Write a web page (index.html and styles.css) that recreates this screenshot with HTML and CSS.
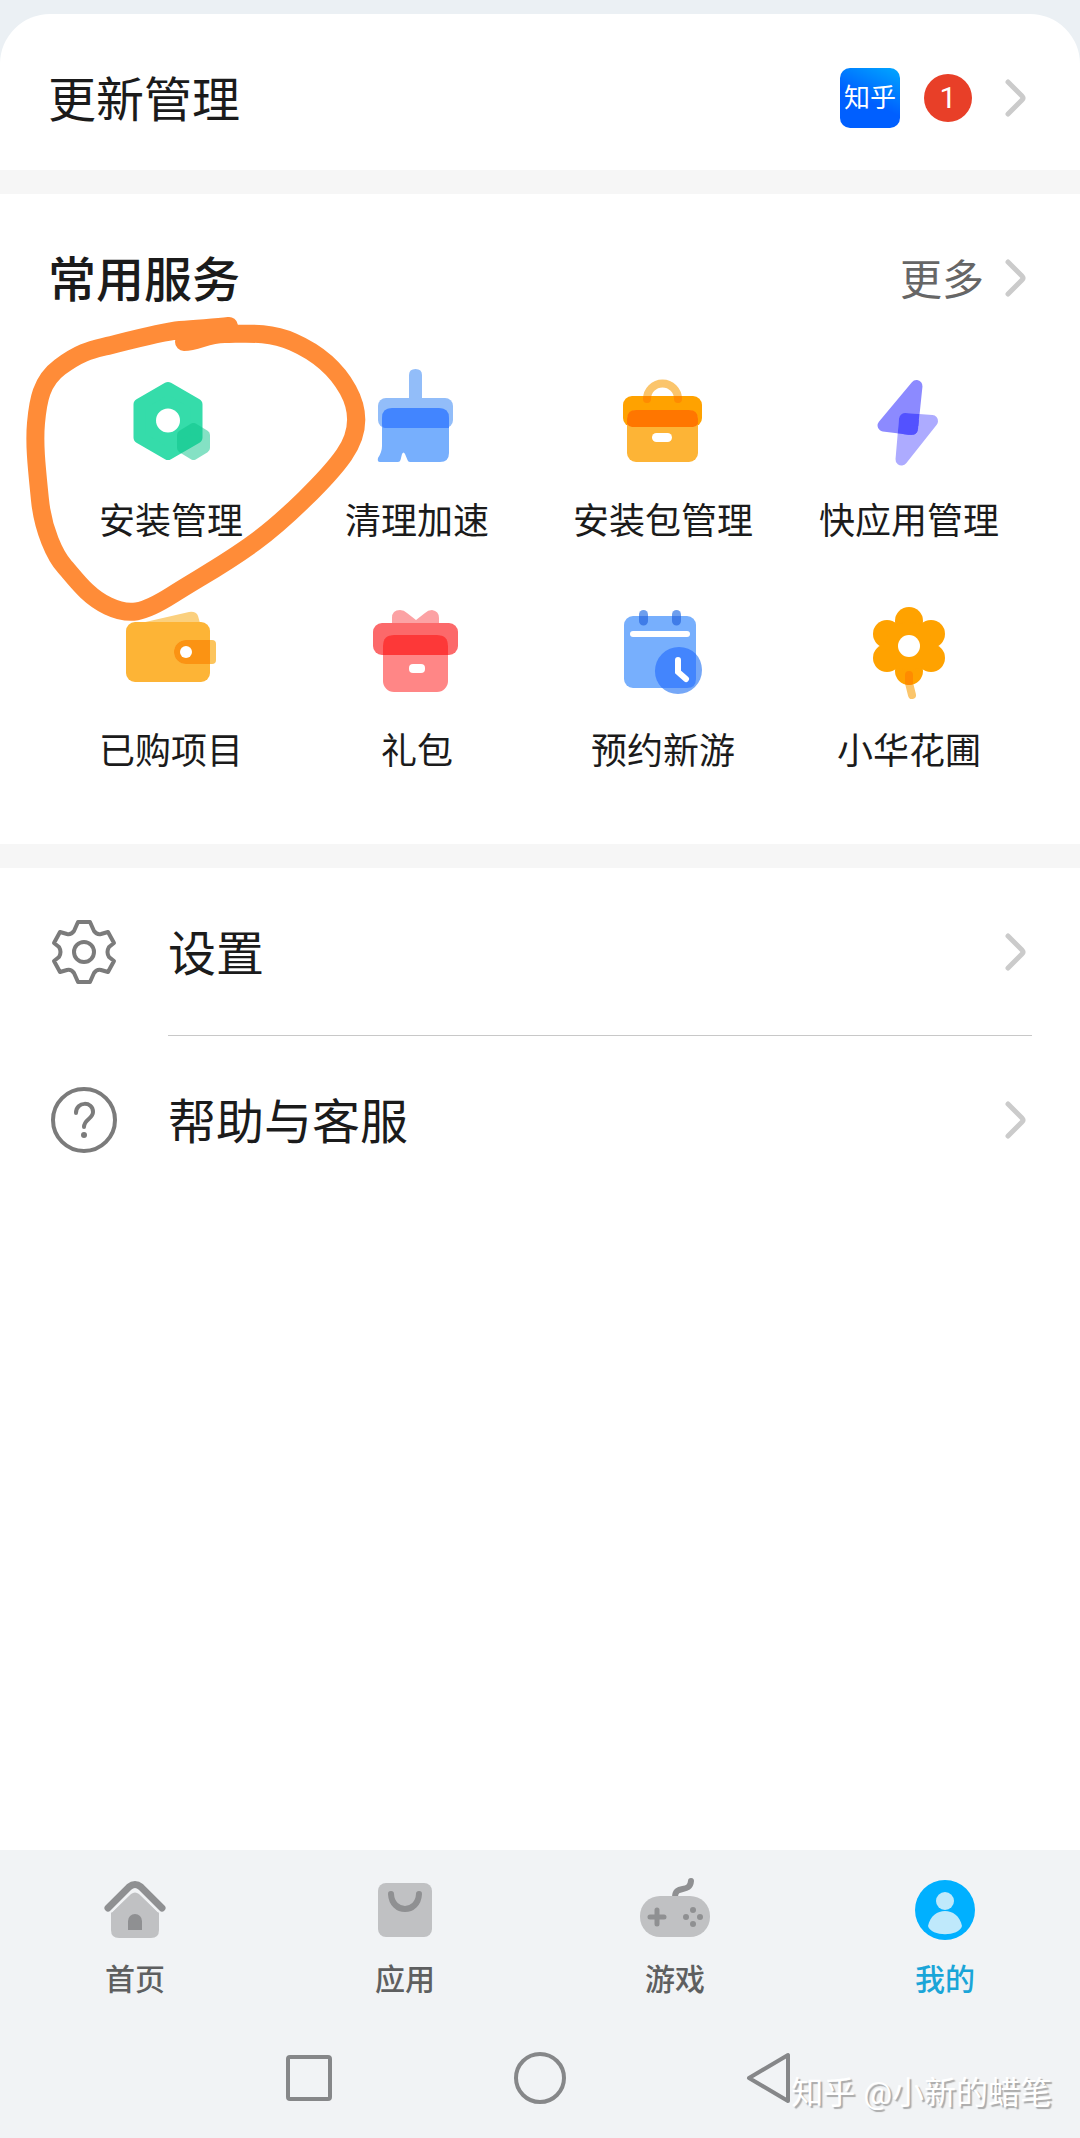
FILE: index.html
```html
<!DOCTYPE html>
<html lang="zh-CN">
	<head>
		<meta charset="utf-8">
		<meta name="viewport" content="width=device-width, initial-scale=1">
		<title>我的</title>
		<link rel="stylesheet" href="styles.css">
	</head>
	<body>

		<!-- one arrow shape, shared by every row -->
		<svg class="defs" aria-hidden="true">
			<symbol id="arrow" viewBox="0 0 32 44">
				<path d="M8 6 L22 20 Q24 22 22 24 L8 38" fill="none" stroke="#cbcbcb" stroke-width="5" stroke-linecap="round"/>
			</symbol>
		</svg>

		<main>

			<!-- updates -->
			<a class="updates" href="#">
				<span class="title">更新管理</span>
				<span class="app">知乎</span>
				<span class="count">1</span>
				<svg class="arrow"><use href="#arrow"/></svg>
			</a>

			<!-- common services -->
			<section class="services">
				<header>
					<h2>常用服务</h2>
					<a class="more" href="#"><span>更多</span> <svg class="arrow"><use href="#arrow"/></svg></a>
				</header>

				<div class="grid">
					<a href="#">
						<svg viewBox="0 0 104 104">
							<path d="M49 22 L77.5 38.5 V71.5 L49 88 L20.5 71.5 V38.5 Z" fill="#35dcaa" stroke="#35dcaa" stroke-width="12" stroke-linejoin="round"/>
							<g opacity=".5">
								<path d="M74.5 62 L86 69 V82 L74.5 89 L63 82 V69 Z" fill="#0cc48a" stroke="#0cc48a" stroke-width="10" stroke-linejoin="round"/>
							</g>
							<circle cx="49" cy="54.5" r="12" fill="#fff"/>
						</svg>
						安装管理
					</a>
					<a href="#">
						<svg viewBox="0 0 104 104">
							<path d="M44 32 V9 Q44 3 50.5 3 Q57 3 57 9 V32 Z" fill="#92bdf9"/>
							<rect x="13" y="32" width="75" height="30" rx="8" fill="#92bdf9"/>
							<path d="M17 52 Q17 42 27 42 H74 Q84 42 84 52 V87 Q84 96 75 96 H45 Q43 96 42.5 94 L40 88 Q38.5 85 37 88 L35.5 94 Q35 96 33 96 H15 Q12 96 13 92 Q17 86 17 80 Z" fill="#77affd"/>
							<path d="M17 52 Q17 42 27 42 H74 Q84 42 84 52 V62 H20 Q17 62 17 59 Z" fill="#4285ff"/>
						</svg>
						清理加速
					</a>
					<a href="#">
						<svg viewBox="0 0 104 104">
							<defs><clipPath id="lid"><rect x="12" y="30" width="79" height="31"/></clipPath></defs>
							<path d="M36 33 A15 15 0 0 1 67 33" fill="none" stroke="#fbc56b" stroke-width="8" stroke-linecap="round"/>
							<rect x="12" y="30" width="79" height="31" rx="9" fill="#ffa200"/>
							<path d="M36 33 A15 15 0 0 1 67 33" fill="none" stroke="#ff8b00" stroke-width="8" stroke-linecap="round" clip-path="url(#lid)"/>
							<rect x="16" y="44" width="71" height="52" rx="9" fill="#fdb436"/>
							<path d="M16 53 Q16 44 25 44 H78 Q87 44 87 53 V58 Q85 61 82 61 H21 Q18 61 16 58 Z" fill="#ff7600"/>
							<rect x="41" y="67" width="20" height="9" rx="4.5" fill="#fff"/>
						</svg>
						安装包管理
					</a>
					<a href="#">
						<svg viewBox="0 0 104 104">
							<defs><clipPath id="bolt"><path d="M65 20 L61 63 Q60 69 54 69 L20 65 V14 H65 Z"/></clipPath></defs>
							<path d="M59.5 20 L26.5 59.5 L55 63 Z" fill="#8c8aff" stroke="#8c8aff" stroke-width="12" stroke-linejoin="round"/>
							<path d="M48 53 L75 55 L44.5 93.5 Z" fill="#adabff" stroke="#adabff" stroke-width="12" stroke-linejoin="round"/>
							<path d="M48 53 L75 55 L44.5 93.5 Z" fill="#5352ff" stroke="#5352ff" stroke-width="12" stroke-linejoin="round" clip-path="url(#bolt)"/>
						</svg>
						快应用管理
					</a>
					<a href="#">
						<svg viewBox="0 0 104 104">
							<path d="M22 27 L70 16 Q77 15 79 20 L81 27 Z" fill="#fbd07e"/>
							<rect x="7" y="26" width="84" height="60" rx="9" fill="#fdb436"/>
							<path d="M67 44 H93 Q97 44 97 48 V64 Q97 68 93 68 H67 A12 12 0 0 1 67 44 Z" fill="#fcc45c"/>
							<path d="M67 44 H91 V68 H67 A12 12 0 0 1 67 44 Z" fill="#fb9313"/>
							<circle cx="67" cy="56" r="6" fill="#fff"/>
						</svg>
						已购项目
					</a>
					<a href="#">
						<svg viewBox="0 0 104 104">
							<path d="M27 28 V22 Q27 14 35 14 Q39 14 42 17 L51 24 L60 17 Q63 14 67 14 Q74 15 74 22 V28 Z" fill="#fca2a4"/>
							<rect x="8" y="27" width="85" height="32" rx="9" fill="#fc696a"/>
							<rect x="18" y="39" width="65" height="57" rx="11" fill="#ff8686"/>
							<path d="M18 50 Q18 39 29 39 H72 Q83 39 83 50 V59 H18 Z" fill="#fd3838"/>
							<rect x="44" y="68" width="16" height="9" rx="4" fill="#fff"/>
						</svg>
						礼包
					</a>
					<a href="#">
						<svg viewBox="0 0 104 104">
							<rect x="28" y="14" width="9" height="15" rx="4.5" fill="#6d9eed"/>
							<rect x="61" y="14" width="9" height="15" rx="4.5" fill="#6d9eed"/>
							<circle cx="67" cy="74" r="24" fill="#75a7f7"/>
							<rect x="13" y="20" width="72" height="72" rx="9" fill="#77affd"/>
							<path d="M28 20 H37 V25 A4.5 4.5 0 0 1 28 25 Z M61 20 H70 V25 A4.5 4.5 0 0 1 61 25 Z" fill="#3f7ce8"/>
							<path d="M22 38 H76" stroke="#fff" stroke-width="6" stroke-linecap="round"/>
							<path d="M85 58 V83 Q85 92 76 92 H51 A24 24 0 1 1 85 58 Z" fill="#4385fd"/>
							<path d="M67 64 V76 L75 83" fill="none" stroke="#fff" stroke-width="6" stroke-linecap="round"/>
						</svg>
						预约新游
					</a>
					<a href="#">
						<svg viewBox="0 0 104 104">
							<path d="M52 79 V87 L55 99" fill="none" stroke="#fbc56b" stroke-width="8" stroke-linecap="round"/>
							<g fill="#ffa200">
								<circle cx="52" cy="25" r="14"/>
								<circle cx="30" cy="38" r="14"/>
								<circle cx="74" cy="38" r="14"/>
								<circle cx="30" cy="62" r="14"/>
								<circle cx="74" cy="62" r="14"/>
								<circle cx="52" cy="75" r="14"/>
								<circle cx="52" cy="50" r="24"/>
							</g>
							<path d="M48 79 A4 4 0 0 1 56 79 V88 Q52 90 48 88 Z" fill="#ff8b00"/>
							<circle cx="52" cy="50" r="11" fill="#fff"/>
						</svg>
						小华花圃
					</a>
				</div>

				<!-- hand-drawn ring round the first service -->
				<svg class="ring" viewBox="20 316 360 310" aria-hidden="true">
					<path d="M184 342 C198 342 206 334 225 334 S268 331 293 342 S337 370 348 390 S360 432 344 455 S285 520 255 542 S202 576 172 595 S129 616 108 606 S75 578 65 567 S43 530 40 500 S34 445 36 423 S41 381 60 367 S90 350 103 347 S160 332 180 330 S215 328 229 326" fill="none" stroke="#ff8c38" stroke-width="18" stroke-linecap="round"/>
				</svg>
			</section>

			<!-- settings and help -->
			<nav class="list">
				<a href="#">
					<svg class="icon" viewBox="0 0 72 72" fill="none" stroke="#7b7b7b" stroke-width="4" stroke-linejoin="round">
						<path d="M30 6 H42 L46 15 Q49 19 53 18 L60 16 L66 27 L61 31 Q58 36 61 41 L66 45 L60 56 L53 54 Q49 53 46 57 L42 66 H30 L26 57 Q23 53 19 54 L12 56 L6 45 L11 41 Q14 36 11 31 L6 27 L12 16 L19 18 Q23 19 26 15 Z"/>
						<circle cx="36" cy="36" r="10"/>
					</svg>
					<span class="title">设置</span>
					<svg class="arrow"><use href="#arrow"/></svg>
				</a>
				<a href="#">
					<svg class="icon" viewBox="0 0 72 72" fill="none" stroke="#7b7b7b" stroke-width="4" stroke-linecap="round">
						<circle cx="36" cy="36" r="31"/>
						<path d="M28 29 C28 17 45 17 45 28 C45 35 36 35 36 43"/>
						<circle cx="36" cy="51" r="3" fill="#7b7b7b" stroke="none"/>
					</svg>
					<span class="title">帮助与客服</span>
					<svg class="arrow"><use href="#arrow"/></svg>
				</a>
			</nav>

		</main>

		<footer>
			<!-- tabs -->
			<nav class="tabs">
				<a href="#">
					<svg viewBox="0 0 72 72">
						<path d="M12 39 L32 20 Q36 17 40 20 L60 39 V56 Q60 64 52 64 H20 Q12 64 12 56 Z" fill="#c0c1c3"/>
						<path d="M9 34 L30 13 Q36 8 42 13 L63 34" fill="none" stroke="#f1f3f5" stroke-width="12"/>
						<path d="M9 34 L30 13 Q36 8 42 13 L63 34" fill="none" stroke="#8f9092" stroke-width="7" stroke-linecap="round"/>
						<path d="M29 56 V47 A7 7 0 0 1 43 47 V56 Z" fill="#8f9092"/>
					</svg>
					首页
				</a>
				<a href="#">
					<svg viewBox="0 0 72 72">
						<rect x="9" y="9" width="54" height="54" rx="8" fill="#c0c1c3"/>
						<path d="M22 20 C23 40 49 40 50 20" fill="none" stroke="#8f9092" stroke-width="6" stroke-linecap="round"/>
					</svg>
					应用
				</a>
				<a href="#">
					<svg viewBox="0 0 72 72">
						<path d="M36 23 C36 10 51 20 52 7" fill="none" stroke="#8f9092" stroke-width="6" stroke-linecap="round"/>
						<rect x="1" y="22" width="70" height="41" rx="20" fill="#c0c1c3"/>
						<path d="M11 43 H25 M18 36 V50" stroke="#8f9092" stroke-width="5" stroke-linecap="round"/>
						<g fill="#8f9092">
							<circle cx="54" cy="36" r="3"/>
							<circle cx="54" cy="50" r="3"/>
							<circle cx="47" cy="43" r="3"/>
							<circle cx="61" cy="43" r="3"/>
						</g>
					</svg>
					游戏
				</a>
				<a class="active" href="#">
					<svg viewBox="0 0 72 72">
						<circle cx="36" cy="36" r="30" fill="#00b0ff"/>
						<circle cx="36" cy="27" r="9" fill="#bfe9fb"/>
						<path d="M19 52 C23 32 49 32 53 52 C50 63 22 63 19 52 Z" fill="#bfe9fb"/>
					</svg>
					我的
				</a>
			</nav>

			<!-- system keys -->
			<div class="keys">
				<button type="button" aria-label="最近任务"><svg viewBox="0 0 56 56"><rect x="7" y="7" width="42" height="42" rx="2"/></svg></button>
				<button type="button" aria-label="主屏幕"><svg viewBox="0 0 56 56"><circle cx="28" cy="28" r="24"/></svg></button>
				<button type="button" aria-label="返回"><svg viewBox="0 0 56 56"><path d="M6 28 L45 5 V51 Z"/></svg></button>
			</div>

			<span class="watermark">知乎 @小新的蜡笔</span>
		</footer>

	</body>
</html>
```
FILE: styles.css
```css
* {
	box-sizing: border-box;
}

body {
	display: flex;
	flex-direction: column;
	min-height: 100vh;
	margin: 0;
	padding-top: 14px;
	background-color: #ebf0f4;
	color: #1b1b1b;
	font-family: Roboto, "Noto Sans CJK SC", sans-serif;
}

a {
	color: inherit;
	text-decoration: none;
}

svg {
	display: block;
	flex: none;
}

main {
	flex: 1;
	border-radius: 50px 50px 0 0;
	background-color: #fff;
}

.defs {
	position: absolute;
	width: 0;
	height: 0;
}

.title {
	flex: 1;
	padding-top: 6px;
	font-size: 48px;
	line-height: 54px;
}

.arrow {
	width: 32px;
	height: 44px;
}

/* updates */

.updates {
	display: flex;
	align-items: center;
	padding: 54px 48px 42px;
	border-bottom: 24px solid #f6f6f6;
}

.app {
	width: 60px;
	border-radius: 10px;
	background: linear-gradient(25deg, #005fff 45%, #00a8ff);
	color: #fff;
	font-size: 26px;
	line-height: 60px;
	text-align: center;
}

.count {
	width: 48px;
	margin: 0 28px 0 24px;
	border-radius: 24px;
	background-color: #e83f28;
	color: #fff;
	font-size: 30px;
	line-height: 48px;
	text-align: center;
}

/* common services */

.services {
	position: relative;
	padding: 54px 48px 68px;
	border-bottom: 24px solid #f6f6f6;
}

.services header {
	display: flex;
	align-items: center;
	justify-content: space-between;
}

.services h2 {
	margin: 0;
	padding-top: 6px;
	font-size: 48px;
	font-weight: 500;
	line-height: 54px;
}

.more {
	display: flex;
	align-items: center;
	gap: 16px;
	color: #666;
	font-size: 42px;
	line-height: 54px;
}

.more span {
	padding-top: 6px;
}

.grid {
	display: grid;
	grid-template-columns: repeat(4, 1fr);
	row-gap: 50px;
	margin-top: 58px;
}

.grid a {
	display: flex;
	flex-direction: column;
	align-items: center;
	gap: 28px;
	font-size: 36px;
	line-height: 48px;
}

.grid svg {
	width: 104px;
	height: 104px;
}

.ring {
	position: absolute;
	top: 122px;
	left: 20px;
	width: 360px;
	height: 310px;
}

/* settings and help */

.list a {
	display: flex;
	align-items: center;
	gap: 48px;
	height: 168px;
	margin: 0 48px;
	position: relative;
}

.list a + a::before {
	content: "";
	position: absolute;
	top: -1px;
	left: 120px;
	right: 0;
	border-top: 1px solid #c8c8c8;
}

.icon {
	width: 72px;
	height: 72px;
}

/* tabs */

footer {
	position: relative;
	background-color: #f1f3f5;
}

.tabs {
	display: grid;
	grid-template-columns: repeat(4, 1fr);
	padding-top: 24px;
}

.tabs a {
	display: flex;
	flex-direction: column;
	align-items: center;
	gap: 14px;
	color: #5e5f60;
	font-size: 30px;
	font-weight: 500;
	line-height: 40px;
}

.tabs svg {
	width: 72px;
	height: 72px;
}

.tabs .active {
	color: #1aa5d8;
}

/* system keys */

.keys {
	display: flex;
	justify-content: center;
	gap: 175px;
	padding: 50px 0 32px;
}

.keys button {
	padding: 0;
	border: 0;
	background: none;
}

.keys svg {
	width: 56px;
	height: 56px;
	fill: none;
	stroke: #868789;
	stroke-width: 4;
	stroke-linejoin: round;
}

.watermark {
	position: absolute;
	right: 28px;
	bottom: 24px;
	color: #fff;
	font-size: 32px;
	line-height: 42px;
	text-shadow: 2px 2px 1px #aaa;
}
```
